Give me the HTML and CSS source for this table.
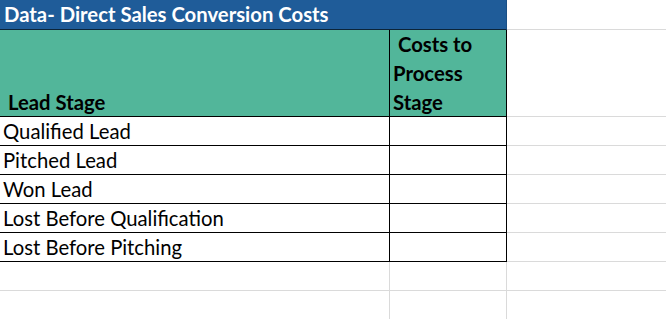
FILE: index.html
```html
<!DOCTYPE html>
<html lang="en">
<head>
<meta charset="utf-8">
<title>Data- Direct Sales Conversion Costs</title>
<link rel="stylesheet" href="styles.css">
</head>
<body>
<div class="sheet">
  <div class="cell title">Data- Direct Sales Conversion Costs</div>
  <div class="cell blank"></div>

  <div class="cell head head-a"> Lead Stage</div>
  <div class="cell head head-b"> Costs to<br>Process<br>Stage</div>
  <div class="cell blank"></div>

  <div class="cell data">Qualified Lead</div>
  <div class="cell data data-b"></div>
  <div class="cell blank"></div>

  <div class="cell data">Pitched Lead</div>
  <div class="cell data data-b"></div>
  <div class="cell blank"></div>

  <div class="cell data">Won Lead</div>
  <div class="cell data data-b"></div>
  <div class="cell blank"></div>

  <div class="cell data">Lost Before Qualification</div>
  <div class="cell data data-b"></div>
  <div class="cell blank"></div>

  <div class="cell data">Lost Before Pitching</div>
  <div class="cell data data-b"></div>
  <div class="cell blank"></div>

  <div class="cell empty"></div>
  <div class="cell empty"></div>
  <div class="cell blank"></div>

  <div class="cell empty"></div>
  <div class="cell empty"></div>
  <div class="cell blank"></div>
</div>
</body>
</html>
```
FILE: styles.css
```css
html, body {
  margin: 0;
  padding: 0;
  background: #ffffff;
}

.sheet {
  display: grid;
  grid-template-columns: 390px 117px 1fr;
  grid-template-rows: 30px 87px repeat(7, 29px);
  width: 666px;
  height: 319px;
  overflow: hidden;
  font-family: Lato, "Open Sans", sans-serif;
  font-size: 20.3px;
  color: #000000;
}

.cell {
  box-sizing: border-box;
  border-right: 1px solid #dadada;
  border-bottom: 1px solid #dadada;
  white-space: pre;
  overflow: visible;
  padding-left: 3px;
  line-height: 28px;
}

.blank {
  border-right: none;
}

.title {
  grid-column: 1 / span 2;
  background: #1f5c99;
  color: #ffffff;
  font-weight: bold;
  line-height: 29px;
  padding-left: 4px;
  border-right: 1px solid #1a4f85;
  border-bottom: 1px solid #0c2438;
}

.head {
  background: #52b69a;
  font-weight: bold;
  line-height: 29px;
  border-right: 1px solid #000000;
  border-bottom: 1px solid #000000;
}

.head-a {
  padding-top: 58px;
}

.head-b {
  padding-left: 3px;
}

.data {
  border-right: 1px solid #000000;
  border-bottom: 1px solid #000000;
}
```
